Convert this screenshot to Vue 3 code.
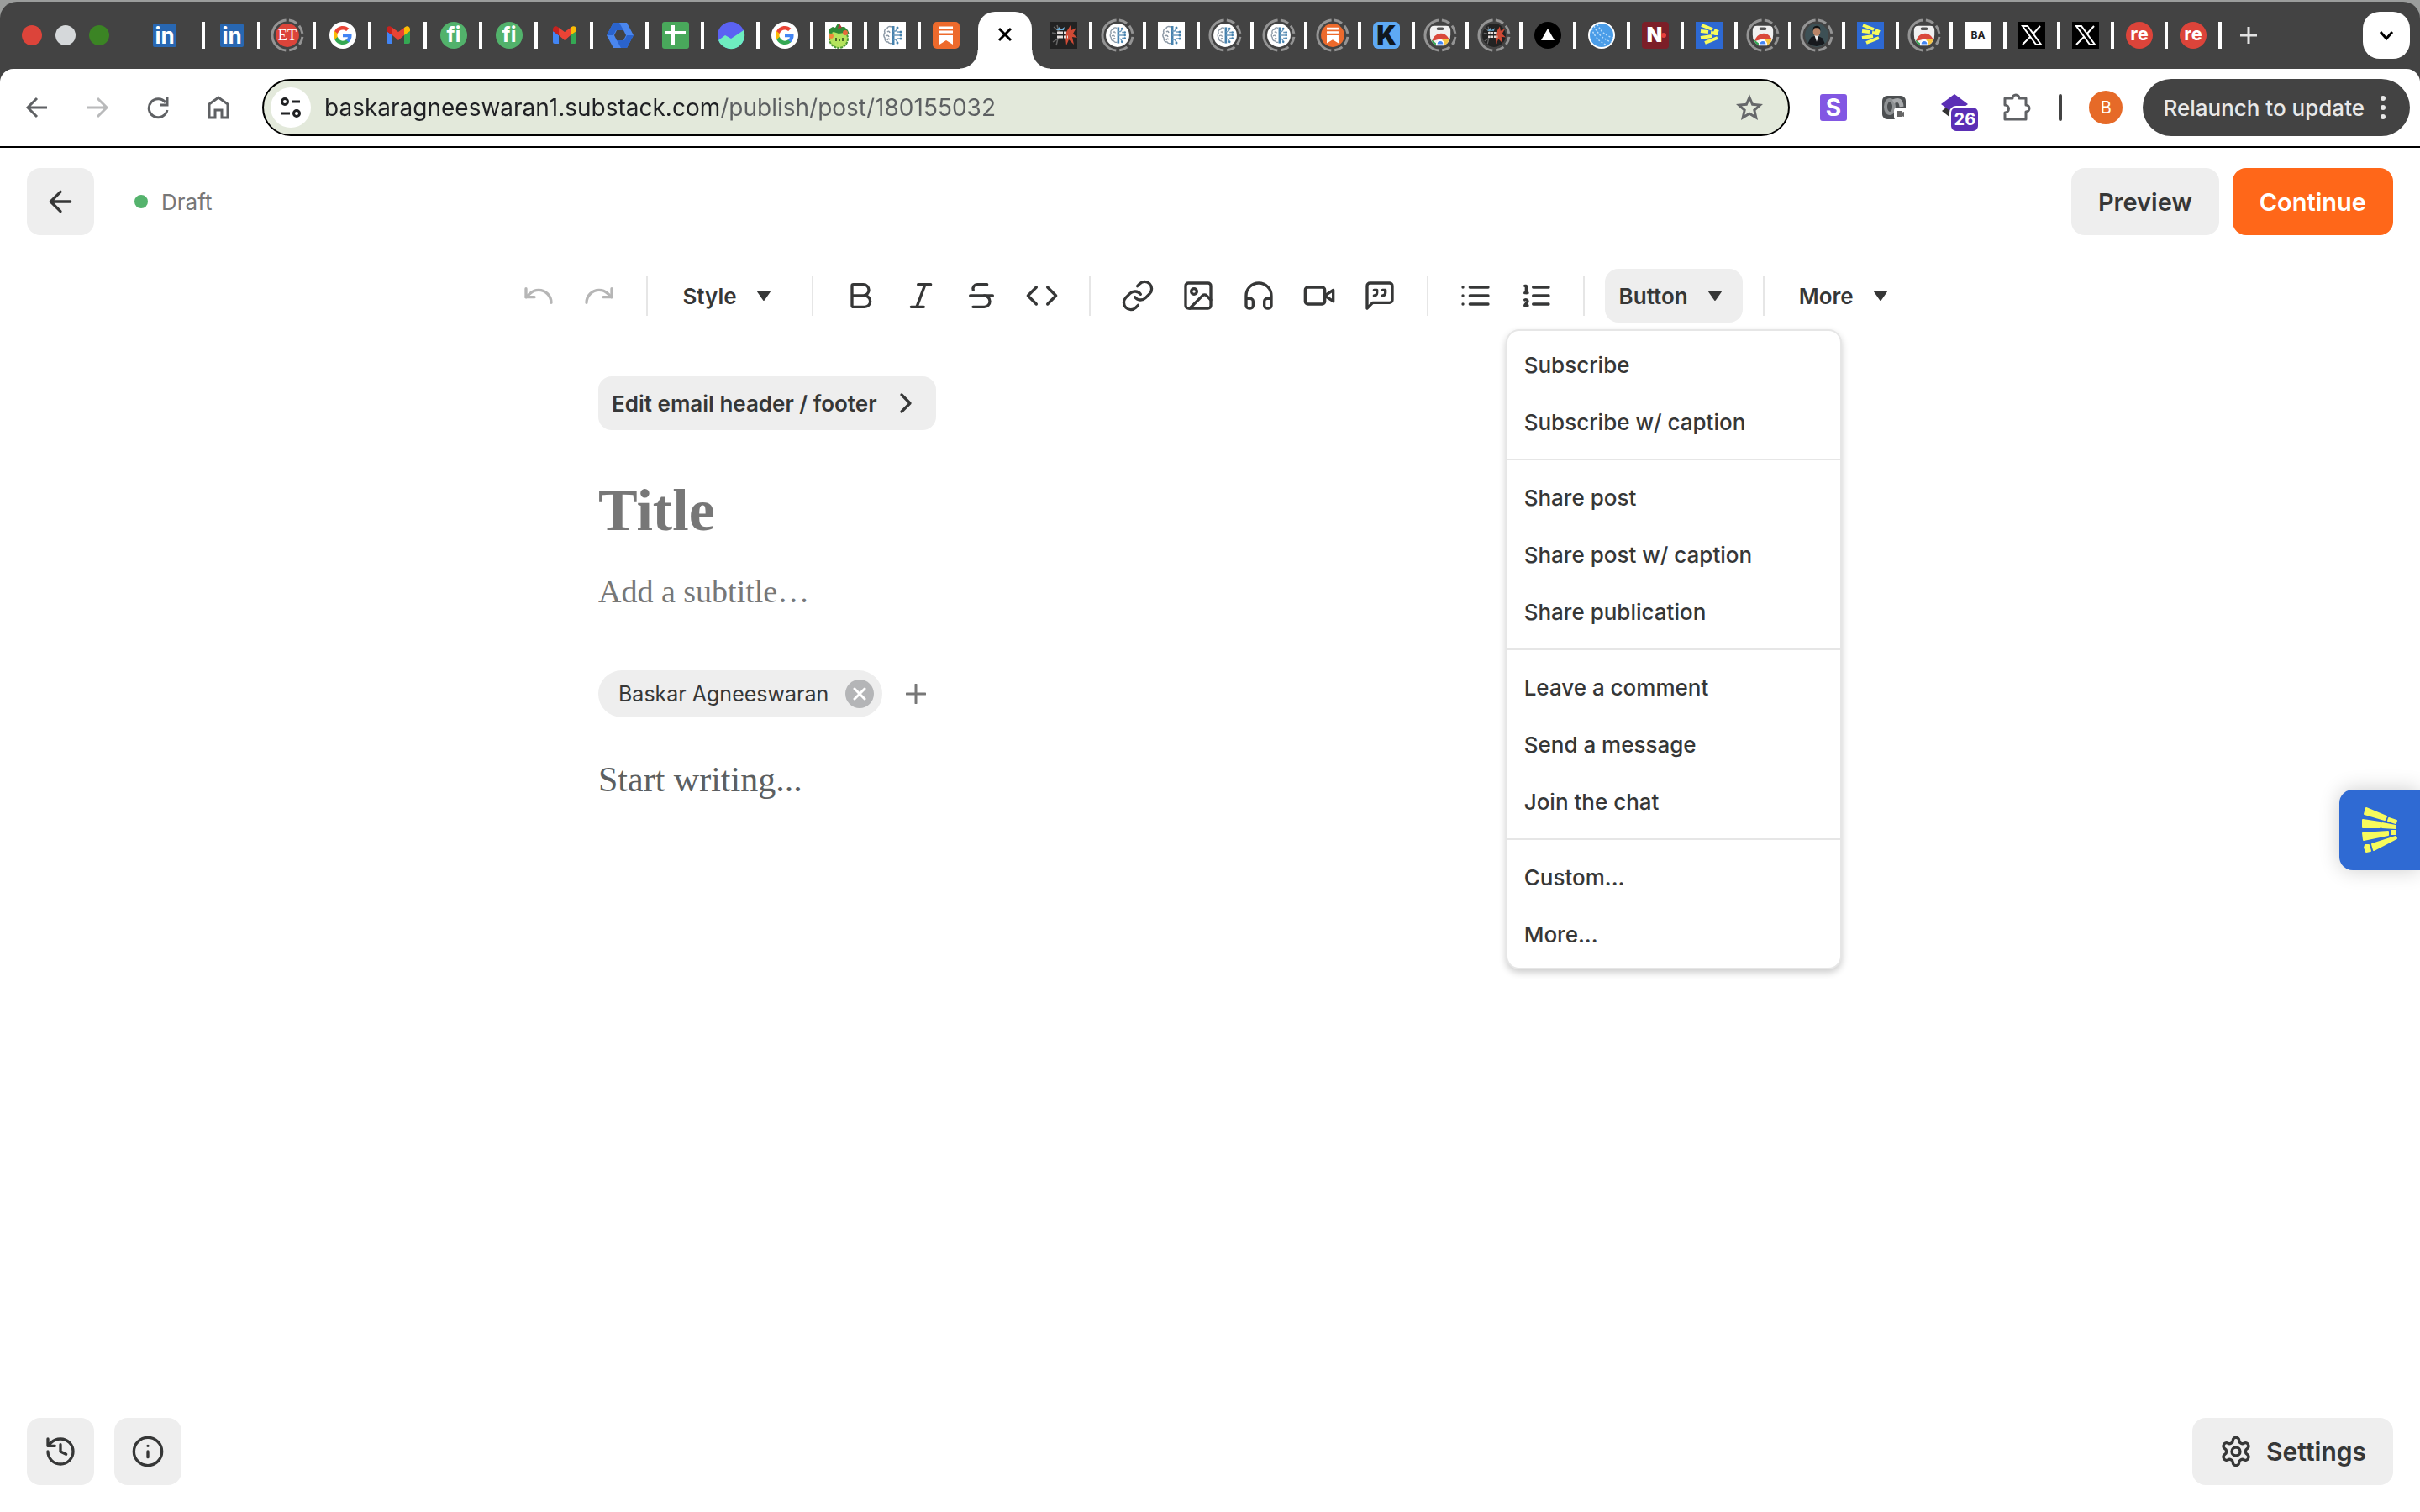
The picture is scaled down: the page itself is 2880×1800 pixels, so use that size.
<script setup>
import { ref } from 'vue';

const tabs = ref([
    { icon: 'linkedin', size: 'first' },
    { icon: 'linkedin', size: 'wide' },
    { icon: 'et', size: 'wide', ring: true },
    { icon: 'google', size: 'wide' },
    { icon: 'gmail', size: 'wide' },
    { icon: 'fi', size: 'wide' },
    { icon: 'fi', size: 'wide' },
    { icon: 'gmail', size: 'wide' },
    { icon: 'hexagon', size: 'wide' },
    { icon: 'sheets', size: 'wide' },
    { icon: 'wave', size: 'wide' },
    { icon: 'google' },
    { icon: 'monster' },
    { icon: 'brain' },
    { icon: 'substack', size: 'last' },
    { active: true },
    { icon: 'game' },
    { icon: 'brain', ring: true },
    { icon: 'brain' },
    { icon: 'brain', ring: true },
    { icon: 'brain', ring: true },
    { icon: 'substack', ring: true },
    { icon: 'k' },
    { icon: 'store', ring: true },
    { icon: 'game', ring: true },
    { icon: 'triangle' },
    { icon: 'ball' },
    { icon: 'n' },
    { icon: 'hand' },
    { icon: 'store', ring: true },
    { icon: 'person', ring: true },
    { icon: 'hand' },
    { icon: 'store', ring: true },
    { icon: 'ba' },
    { icon: 'x' },
    { icon: 'x' },
    { icon: 're' },
    { icon: 're' },
]);

// stroke icons, 24x24
const icons = {
    undo: ['M3 7v6h6', 'M21 17a9 9 0 0 0-9-9 9 9 0 0 0-6 2.3L3 13'],
    redo: ['M21 7v6h-6', 'M3 17a9 9 0 0 1 9-9 9 9 0 0 1 6 2.3l3 2.7'],
    bold: ['M6 12h9a4 4 0 0 1 0 8H7a1 1 0 0 1-1-1V5a1 1 0 0 1 1-1h7a4 4 0 0 1 0 8'],
    italic: ['M19 4h-9', 'M14 20H5', 'M15 4 9 20'],
    strike: ['M16 4H9a3 3 0 0 0-2.83 4', 'M14 12a4 4 0 0 1 0 8H6', 'M4 12h16'],
    code: ['m16 18 6-6-6-6', 'm8 6-6 6 6 6'],
    link: [
        'M10 13a5 5 0 0 0 7.54.54l3-3a5 5 0 0 0-7.07-7.07l-1.72 1.71',
        'M14 11a5 5 0 0 0-7.54-.54l-3 3a5 5 0 0 0 7.07 7.07l1.71-1.71',
    ],
    image: [
        'M5 3h14a2 2 0 0 1 2 2v14a2 2 0 0 1-2 2H5a2 2 0 0 1-2-2V5a2 2 0 0 1 2-2z',
        'M11 9a2 2 0 1 1-4 0 2 2 0 0 1 4 0z',
        'm21 15-3.086-3.086a2 2 0 0 0-2.828 0L6 21',
    ],
    audio: ['M3 14h3a2 2 0 0 1 2 2v3a2 2 0 0 1-2 2H5a2 2 0 0 1-2-2v-7a9 9 0 0 1 18 0v7a2 2 0 0 1-2 2h-1a2 2 0 0 1-2-2v-3a2 2 0 0 1 2-2h3'],
    video: ['m22 8-6 4 6 4V8Z', 'M4 6h10a2 2 0 0 1 2 2v8a2 2 0 0 1-2 2H4a2 2 0 0 1-2-2V8a2 2 0 0 1 2-2z'],
    quote: [
        'M21 15a2 2 0 0 1-2 2H7l-4 4V5a2 2 0 0 1 2-2h14a2 2 0 0 1 2 2z',
        'M8 12a2 2 0 0 0 2-2V8H8',
        'M14 12a2 2 0 0 0 2-2V8h-2',
    ],
    list: ['M8 6h13', 'M8 12h13', 'M8 18h13', 'M3 6h.01', 'M3 12h.01', 'M3 18h.01'],
    ordered: ['M10 6h11', 'M10 12h11', 'M10 18h11', 'M4 5h1v5', 'M4 10h2', 'M6 19H4c0-1 2-2 2-3s-1-1.5-2-1'],
};

const groups = [
    [{ icon: 'undo', label: 'Undo', disabled: true }, { icon: 'redo', label: 'Redo', disabled: true }],
    [{ text: 'Style' }],
    [
        { icon: 'bold', label: 'Bold' },
        { icon: 'italic', label: 'Italic' },
        { icon: 'strike', label: 'Strikethrough' },
        { icon: 'code', label: 'Code' },
    ],
    [
        { icon: 'link', label: 'Link' },
        { icon: 'image', label: 'Image' },
        { icon: 'audio', label: 'Audio' },
        { icon: 'video', label: 'Video' },
        { icon: 'quote', label: 'Quote' },
    ],
    [{ icon: 'list', label: 'Bullet list' }, { icon: 'ordered', label: 'Numbered list' }],
    [{ text: 'Button', menu: true }],
    [{ text: 'More' }],
];

const menu = [
    ['Subscribe', 'Subscribe w/ caption'],
    ['Share post', 'Share post w/ caption', 'Share publication'],
    ['Leave a comment', 'Send a message', 'Join the chat'],
    ['Custom...', 'More...'],
];

const url = ref('baskaragneeswaran1.substack.com/publish/post/180155032');
const title = ref('');
const subtitle = ref('');
const body = ref('');
const menuOpen = ref(true);
</script>

<template>
    <div class="window">
        <div class="tab-strip">
            <div class="lights">
                <span class="light red"></span>
                <span class="light grey"></span>
                <span class="light green"></span>
            </div>
            <template v-for="(tab, i) in tabs" :key="i">
                <button v-if="tab.active" class="tab-active" aria-label="Close tab">
                    <svg width="20" height="20" viewBox="0 0 20 20"><path d="M3 3l14 14M17 3L3 17" stroke="#000" stroke-width="3" /></svg>
                </button>
                <button v-else class="tab" :class="tab.size" :aria-label="tab.icon">
                    <svg width="40" height="40" viewBox="-20 -20 40 40">
                        <circle v-if="tab.ring" r="18" fill="none" stroke="#949494" stroke-width="3" stroke-dasharray="10 4 10 4 10 4 10 4 53 4" transform="rotate(-84)" />
                        <g :class="{ ringed: tab.ring }">
                            <g v-if="tab.icon === 'linkedin'">
                                <rect x="-14" y="-14" width="28" height="28" rx="2" fill="#2867b2" />
                                <text class="logo" x="0" y="10" font-size="26" fill="#fff">in</text>
                            </g>
                            <g v-else-if="tab.icon === 'et'">
                                <circle r="16" fill="#dc443a" />
                                <text class="logo serif" x="0" y="7" font-size="21" fill="#fff">ET</text>
                            </g>
                            <g v-else-if="tab.icon === 'google'">
                                <circle r="16" fill="#fff" />
                                <g transform="translate(-12 -12)">
                                    <path fill="#4285f4" d="M22.56 12.25c0-.78-.07-1.53-.2-2.25H12v4.26h5.92c-.26 1.37-1.04 2.53-2.21 3.31v2.77h3.57c2.08-1.92 3.28-4.74 3.28-8.09z" />
                                    <path fill="#34a853" d="M12 23c2.97 0 5.46-.98 7.28-2.66l-3.57-2.77c-.98.66-2.23 1.06-3.71 1.06-2.86 0-5.29-1.93-6.16-4.53H2.18v2.84C3.99 20.53 7.7 23 12 23z" />
                                    <path fill="#fbbc05" d="M5.84 14.09c-.22-.66-.35-1.36-.35-2.09s.13-1.43.35-2.09V7.07H2.18C1.43 8.55 1 10.22 1 12s.43 3.45 1.18 4.93l3.66-2.84z" />
                                    <path fill="#ea4335" d="M12 5.38c1.62 0 3.06.56 4.21 1.64l3.15-3.15C17.45 2.09 14.97 1 12 1 7.7 1 3.99 3.47 2.18 7.07l3.66 2.84c.87-2.6 3.3-4.53 6.16-4.53z" />
                                </g>
                            </g>
                            <g v-else-if="tab.icon === 'gmail'">
                                <path d="M-14-5v13a2 2 0 0 0 2 2h5V0z" fill="#4285f4" />
                                <path d="M14-5v13a2 2 0 0 1-2 2H7V0z" fill="#34a853" />
                                <path d="M-7 0v-9L0-4l7-5v9L0 6z" fill="#ea4335" />
                                <path d="M-14-5v-2c0-4 4-5 7-2v9z" fill="#c5221f" />
                                <path d="M14-5v-2c0-4-4-5-7-2v9z" fill="#fbbc04" />
                            </g>
                            <g v-else-if="tab.icon === 'fi'">
                                <circle r="16" fill="#52b26b" />
                                <text class="logo" x="0" y="8" font-size="25" fill="#fff">fi</text>
                            </g>
                            <g v-else-if="tab.icon === 'hexagon'">
                                <path d="M-8-15H8L16 0 8 15H-8L-16 0z" fill="#4a86ee" />
                                <path d="M-8-15h7L4-6h-9l-3 6h-8zM8 15H1l-5-9h9l3-6h8z" fill="#2a63cc" />
                                <path d="M-4-6h8l3 6-3 6h-8l-3-6z" fill="#424242" />
                            </g>
                            <g v-else-if="tab.icon === 'sheets'">
                                <rect x="-16" y="-16" width="32" height="32" rx="3" fill="#49a85b" />
                                <path d="M-12-3h24M-3-12v24" stroke="#fff" stroke-width="4" />
                            </g>
                            <g v-else-if="tab.icon === 'wave'">
                                <circle r="16" fill="#5b62f3" />
                                <path d="M-15 6l8-6 7 4L15-6A16 16 0 0 1-15 6z" fill="#6eedc0" />
                            </g>
                            <g v-else-if="tab.icon === 'monster'">
                                <rect x="-16" y="-16" width="32" height="32" fill="#fff" />
                                <ellipse cx="0" cy="4" rx="11" ry="11" fill="#b5e45d" stroke="#4c9a36" stroke-width="2" stroke-dasharray="3 1" />
                                <path d="M-11-2l-1-5 5-3 3 1 3-5 4 4 4 0 4 4 2 5-6-2-7 1-6-2z" fill="#2f8b37" />
                                <path d="M-1-8l2-6 3 5z" fill="#b13b38" />
                                <circle cx="-9" cy="1" r="3" fill="#ef8a3c" />
                                <circle cx="8" cy="-3" r="3" fill="#e66a3d" />
                                <path d="M-3 3v4M1 4v3M5 3v4" stroke="#4c6b2a" stroke-width="2" />
                            </g>
                            <g v-else-if="tab.icon === 'brain'">
                                <circle v-if="tab.ring" r="16" fill="#fff" />
                                <rect v-else x="-16" y="-16" width="32" height="32" fill="#fff" />
                                <path d="M-1-10c-3-1-5 0-5 2-3 0-4 3-3 5-2 2-1 5 0 6 0 4 2 5 4 5 1 2 4 2 4 1M-6-4q2-2 3 1M-8 1q3-2 4 1M-6 6q1-3 3-1" fill="none" stroke="#8b98a5" stroke-width="1.5" />
                                <path d="M1-11V11" stroke="#4682ae" stroke-width="3" />
                                <path d="M1-5h3l2-3M1 0h8M1 5h3l2 3M6-4h3M6 4h3" fill="none" stroke="#6d9bbd" stroke-width="1.5" />
                                <circle cx="6" cy="-9" r="1.5" fill="#4682ae" />
                                <circle cx="10" cy="-4" r="1.5" fill="#4682ae" />
                                <circle cx="10" cy="0" r="1.5" fill="#4682ae" />
                                <circle cx="10" cy="4" r="1.5" fill="#4682ae" />
                                <circle cx="6" cy="9" r="1.5" fill="#4682ae" />
                            </g>
                            <g v-else-if="tab.icon === 'substack'">
                                <circle v-if="tab.ring" r="16" fill="#ed6a2c" />
                                <rect v-else x="-16" y="-16" width="32" height="32" rx="5" fill="#ed6a2c" />
                                <path d="M-8-9H8M-8-4H8" stroke="#fff" stroke-width="3" />
                                <path d="M-8 0H8v11l-8-5-8 5z" fill="#fff" />
                            </g>
                            <g v-else-if="tab.icon === 'game'">
                                <circle v-if="tab.ring" r="16" fill="#222" />
                                <rect v-else x="-16" y="-16" width="32" height="32" fill="#222" />
                                <path d="M-12-10l6 5-2-7M-13 8l6-4-2 8M-14-3l5 1" stroke="#666" stroke-width="1.5" fill="none" />
                                <path d="M3-4l5-8 1 6 6-3-4 7 5 5-6-1 2 9-6-6-3 7-1-9z" fill="#cf4a35" />
                                <path d="M-9-6l4-4 2 3 4-3-1 4z" fill="#6faed6" />
                                <path d="M-8-3H4M-8 2H5" stroke="#e6dedb" stroke-width="3" stroke-dasharray="3 1" />
                            </g>
                            <g v-else-if="tab.icon === 'k'">
                                <rect x="-16" y="-16" width="32" height="32" rx="6" fill="#5ea9f4" />
                                <text class="logo black" x="0" y="11" font-size="31" fill="#101820">K</text>
                            </g>
                            <g v-else-if="tab.icon === 'store'">
                                <path d="M-14-7q0-6 6-6H8q6 0 6 6v6q0 11-8 14H-6q-8-3-8-14z" fill="#f1f1f1" />
                                <rect x="-5" y="-11" width="10" height="4" rx="2" fill="#555" />
                                <path d="M-11 8A12 12 0 0 1 12 5H0z" fill="#d9483b" />
                                <path d="M-12 6q1 5 5 7h4z" fill="#34a853" />
                                <path d="M3 5h9q0 5-5 8H2z" fill="#f6c544" />
                                <path d="M-5 13a5 6 0 0 1 10 0z" fill="#4285f4" stroke="#fff" stroke-width="2" />
                            </g>
                            <g v-else-if="tab.icon === 'triangle'">
                                <circle r="16" fill="#000" />
                                <path d="M0-8L8 6H-8z" fill="#fff" />
                            </g>
                            <g v-else-if="tab.icon === 'ball'">
                                <circle r="15" fill="#4b9de8" stroke="#fff" stroke-width="2" />
                                <path d="M-9-11Q-2 4 12 8M-5-13Q1 0 14 3M-12-8Q-6 8 8 12" fill="none" stroke="#b9dcfa" stroke-width="1.5" stroke-dasharray="2 2" />
                            </g>
                            <g v-else-if="tab.icon === 'n'">
                                <rect x="-16" y="-16" width="32" height="32" rx="4" fill="#7c1f28" />
                                <text class="logo black" x="-1" y="8" font-size="24" fill="#fff">N</text>
                                <circle cx="10" cy="0" r="3" fill="#e8413b" />
                            </g>
                            <g v-else-if="tab.icon === 'hand'">
                                <rect x="-16" y="-16" width="32" height="32" fill="#2d69d3" />
                                <path d="M-9-12L4-7M6-6l5 2M-10-5l9 1M2-3l8 1M-10 3l13-2M6-2h4M-9 11v1M-5 9L10 3" stroke="#f7fb5c" stroke-width="4" />
                            </g>
                            <g v-else-if="tab.icon === 'person'">
                                <circle r="16" fill="#3d5055" />
                                <path d="M-12 11l4-8 8-3 8 4 3 7Q0 19-12 11z" fill="#17191d" />
                                <path d="M-3 0l3 9 3-9z" fill="#eee" />
                                <ellipse cx="0" cy="-5" rx="5" ry="6" fill="#b98568" />
                                <path d="M-5-6q-1-7 5-7t5 7l-2-4h-6z" fill="#111" />
                            </g>
                            <g v-else-if="tab.icon === 'ba'">
                                <rect x="-16" y="-16" width="32" height="32" fill="#fff" />
                                <text class="logo" x="0" y="4" font-size="12" fill="#222">BA</text>
                            </g>
                            <g v-else-if="tab.icon === 'x'">
                                <rect x="-16" y="-16" width="32" height="32" fill="#000" />
                                <path d="M-11-11h6L11 11H5zM10-11L1-1M-2 2l-9 9" fill="none" stroke="#fff" stroke-width="2" />
                            </g>
                            <g v-else>
                                <circle r="16" fill="#dc443a" />
                                <text class="logo" x="0" y="6" font-size="22" fill="#fff">re</text>
                            </g>
                        </g>
                    </svg>
                </button>
            </template>
            <button class="new-tab" aria-label="New tab">
                <svg width="20" height="20" viewBox="0 0 20 20"><path d="M10 0v20M0 10h20" stroke="#e3e3e3" stroke-width="3" /></svg>
            </button>
            <button class="tab-search" aria-label="Search tabs">
                <svg width="20" height="20" viewBox="0 0 20 20"><path d="M3 6l7 8 7-8" fill="none" stroke="#000" stroke-width="3" /></svg>
            </button>
        </div>

        <div class="nav-back">
            <div class="nav-bar">
                <div class="nav-buttons">
                    <button aria-label="Back">
                        <svg width="28" height="28" viewBox="0 0 28 28"><path d="M26 14H4M14 3L3 14l11 11" fill="none" stroke="#5f6164" stroke-width="3" /></svg>
                    </button>
                    <button aria-label="Forward">
                        <svg width="28" height="28" viewBox="0 0 28 28"><path d="M2 14h22M14 3l11 11-11 11" fill="none" stroke="#b9babb" stroke-width="3" /></svg>
                    </button>
                    <button aria-label="Reload">
                        <svg width="28" height="28" viewBox="0 0 28 28"><path d="M23 8a11 11 0 1 0 2 9M25 2v9h-9" fill="none" stroke="#5f6164" stroke-width="3" /></svg>
                    </button>
                    <button aria-label="Home">
                        <svg width="28" height="30" viewBox="0 0 28 30"><path d="M3 11L14 3l11 8v16h-7v-9h-8v9H3z" fill="none" stroke="#5f6164" stroke-width="3" /></svg>
                    </button>
                </div>
                <div class="omnibox">
                    <button class="site-info" aria-label="Site information">
                        <svg width="28" height="28" viewBox="0 0 28 28" fill="none" stroke="#1f2023" stroke-width="3">
                            <circle cx="7" cy="7" r="3.5" />
                            <circle cx="21" cy="21" r="3.5" />
                            <path d="M15 7h10M3 21h10" />
                        </svg>
                    </button>
                    <input class="url" type="text" v-model="url" aria-label="Address" />
                    <button aria-label="Bookmark">
                        <svg width="32" height="32" viewBox="0 0 32 32"><path d="M16 4l3.600 8.300 9 .8-6.800 6 2 8.800L16 23.200 8.200 27.900l2-8.800-6.800-6 9-.8z" fill="none" stroke="#66686a" stroke-width="3" /></svg>
                    </button>
                </div>
                <div class="extensions">
                    <button aria-label="Scribe">
                        <svg width="32" height="32" viewBox="0 0 32 32">
                            <rect width="32" height="32" rx="3" fill="#8257e3" />
                            <text class="logo" x="16" y="26" font-size="28" fill="#fff">S</text>
                        </svg>
                    </button>
                    <button aria-label="Recorder">
                        <svg width="32" height="32" viewBox="0 0 32 32">
                            <rect x="2" y="2" width="28" height="28" rx="6" fill="#4d5052" />
                            <ellipse cx="11" cy="15" rx="5" ry="8" fill="none" stroke="#8f9294" stroke-width="4" />
                            <path d="M15 9q9-5 10 6" fill="none" stroke="#a9abad" stroke-width="5" />
                            <rect x="16" y="16" width="15" height="15" rx="4" fill="#fff" />
                            <path d="M19 20h6v2l3-1v6l-3-1v1h-6z" fill="#666" />
                        </svg>
                    </button>
                    <button class="badged" aria-label="Extension with 26 items">
                        <svg width="32" height="32" viewBox="0 0 32 32">
                            <path d="M16 8l15 12-15 12L1 20z" fill="#343434" />
                            <path d="M16 0l16 12-16 12L0 12z" fill="#5b2fb5" />
                        </svg>
                        <span class="badge">26</span>
                    </button>
                    <button aria-label="Extensions">
                        <svg width="36" height="36" viewBox="0 0 36 36"><path d="M4 7h9a4 4 0 0 1 8 0h8v8a4 4 0 0 1 0 8v9H4v-8a4 4 0 0 0 0-9z" fill="none" stroke="#5f6164" stroke-width="3" stroke-linejoin="round" /></svg>
                    </button>
                </div>
                <span class="nav-divider"></span>
                <button class="avatar">B</button>
                <button class="relaunch">
                    Relaunch to update
                    <svg width="8" height="28" viewBox="0 0 8 28" fill="#e8e8e8"><circle cx="4" cy="3" r="3" /><circle cx="4" cy="14" r="3" /><circle cx="4" cy="25" r="3" /></svg>
                </button>
            </div>
        </div>

        <main class="page">
            <header class="post-header">
                <button class="square" aria-label="Back to posts">
                    <svg class="icon" viewBox="0 0 24 24"><path d="m12 19-7-7 7-7M19 12H5" /></svg>
                </button>
                <span class="status"><span class="dot"></span>Draft</span>
                <button class="action">Preview</button>
                <button class="action primary">Continue</button>
            </header>

            <div class="toolbar">
                <div v-for="(group, g) in groups" :key="g" class="group">
                    <template v-for="item in group" :key="item.icon || item.text">
                        <button v-if="item.icon" class="tool" :disabled="item.disabled" :aria-label="item.label">
                            <svg class="icon" viewBox="0 0 24 24"><path v-for="d in icons[item.icon]" :key="d" :d="d" /></svg>
                        </button>
                        <div v-else class="dropdown">
                            <button class="pill" :class="{ open: item.menu && menuOpen }" @click="item.menu && (menuOpen = !menuOpen)">
                                {{ item.text }}
                                <svg width="32" height="32" viewBox="0 0 32 32"><path d="M9 11h14l-7 10z" fill="#363737" stroke="#363737" stroke-width="2" stroke-linejoin="round" /></svg>
                            </button>
                            <div v-if="item.menu && menuOpen" class="menu">
                                <div v-for="(section, s) in menu" :key="s" class="menu-section">
                                    <button v-for="entry in section" :key="entry" class="menu-item">{{ entry }}</button>
                                </div>
                            </div>
                        </div>
                    </template>
                </div>
            </div>

            <div class="editor">
                <button class="edit-header">
                    Edit email header / footer
                    <svg class="icon" viewBox="0 0 24 24"><path d="m9 18 6-6-6-6" /></svg>
                </button>
                <input class="title" type="text" v-model="title" placeholder="Title" aria-label="Title" />
                <input class="subtitle" type="text" v-model="subtitle" placeholder="Add a subtitle…" aria-label="Subtitle" />
                <div class="authors">
                    <span class="author">
                        Baskar Agneeswaran
                        <button class="remove" aria-label="Remove author">
                            <svg width="34" height="34" viewBox="0 0 34 34"><circle cx="17" cy="17" r="17" fill="#b4b5b7" /><path d="M11 11l12 12M23 11L11 23" stroke="#fff" stroke-width="3" stroke-linecap="round" /></svg>
                        </button>
                    </span>
                    <button class="add" aria-label="Add author">
                        <svg width="24" height="24" viewBox="0 0 24 24"><path d="M12 1v22M1 12h22" stroke="#777" stroke-width="3" stroke-linecap="round" /></svg>
                    </button>
                </div>
                <textarea class="body" v-model="body" placeholder="Start writing..." aria-label="Post body"></textarea>
            </div>

            <footer class="footer">
                <button class="square" aria-label="Version history">
                    <svg class="icon" viewBox="0 0 24 24"><path d="M3 12a9 9 0 1 0 9-9 9.750 9.750 0 0 0-6.740 2.740L3 8M3 3v5h5M12 7v5l4 2" /></svg>
                </button>
                <button class="square" aria-label="Post info">
                    <svg class="icon" viewBox="0 0 24 24"><circle cx="12" cy="12" r="10" /><path d="M12 16v-4M12 8h.01" /></svg>
                </button>
                <button class="action settings">
                    <svg class="icon" viewBox="0 0 24 24">
                        <path d="M12.220 2h-.44a2 2 0 0 0-2 2v.18a2 2 0 0 1-1 1.730l-.43.25a2 2 0 0 1-2 0l-.15-.08a2 2 0 0 0-2.730.73l-.22.38a2 2 0 0 0 .73 2.730l.15.1a2 2 0 0 1 1 1.720v.51a2 2 0 0 1-1 1.740l-.15.09a2 2 0 0 0-.73 2.730l.22.38a2 2 0 0 0 2.730.73l.15-.08a2 2 0 0 1 2 0l.43.25a2 2 0 0 1 1 1.730V20a2 2 0 0 0 2 2h.44a2 2 0 0 0 2-2v-.18a2 2 0 0 1 1-1.730l.43-.25a2 2 0 0 1 2 0l.15.08a2 2 0 0 0 2.730-.73l.22-.39a2 2 0 0 0-.73-2.730l-.15-.08a2 2 0 0 1-1-1.740v-.5a2 2 0 0 1 1-1.740l.15-.09a2 2 0 0 0 .73-2.730l-.22-.38a2 2 0 0 0-2.730-.73l-.15.08a2 2 0 0 1-2 0l-.43-.25a2 2 0 0 1-1-1.730V4a2 2 0 0 0-2-2z" />
                        <circle cx="12" cy="12" r="3" />
                    </svg>
                    Settings
                </button>
            </footer>
        </main>

        <button class="side-widget" aria-label="Open side widget">
            <svg width="44" height="56" viewBox="0 0 44 56" fill="#f7fb5c" stroke="#f7fb5c" stroke-width="2" stroke-linejoin="round">
                <path d="M6 2l24 10-2 4L4 9z" />
                <path d="M33 14l9 3-1 3-9-3z" />
                <path d="M2 16l20 3v6L2 25z" />
                <path d="M25 20l16 3v3l-16-1z" />
                <path d="M2 32l30-2v4L3 40z" />
                <path d="M36 29h5v4h-5z" />
                <path d="M13 45l28-9 1 2-27 14z" />
                <path d="M5 46h4l2 7-5 1-2-5z" />
            </svg>
        </button>
    </div>
</template>

<style>
body {
    background: #9b9d9c;
}
</style>

<style scoped>
.window {
    position: relative;
    display: flex;
    flex-direction: column;
    box-sizing: border-box;
    min-height: 100vh;
    padding-top: 2px;
    font-family: Inter, 'Liberation Sans', sans-serif;
    color: #363737;
}

button {
    display: flex;
    align-items: center;
    justify-content: center;
    flex-shrink: 0;
    margin: 0;
    padding: 0;
    border: 0;
    background: none;
    font-family: inherit;
    color: inherit;
    white-space: nowrap;
}

input,
textarea {
    box-sizing: border-box;
    padding: 0;
    border: 0;
    outline: 0;
    background: none;
}

.tab-strip {
    display: flex;
    align-items: center;
    height: 80px;
    padding: 0 12px 0 26px;
    background: #434343;
    border-radius: 20px 20px 0 0;
}

.lights {
    display: flex;
    gap: 16px;
    margin-right: 18px;
}

.light {
    width: 24px;
    height: 24px;
    border-radius: 50%;
}

.red {
    background: #dc443a;
}

.grey {
    background: #d5d8da;
}

.green {
    background: #3b8424;
}

.tab {
    box-sizing: border-box;
    width: 64px;
    height: 32px;
    border-right: 4px solid #fff;
}

.tab.wide {
    width: 66px;
    padding-left: 2px;
}

.tab.first {
    width: 96px;
    padding-left: 4px;
}

.tab.last {
    border-color: transparent;
}

.ringed {
    transform: scale(0.87);
}

.logo {
    font-family: Inter, sans-serif;
    font-weight: 700;
    text-anchor: middle;
}

.logo.serif {
    font-family: 'Liberation Serif', serif;
    font-weight: 400;
}

.logo.black {
    font-weight: 900;
}

.tab-active {
    position: relative;
    align-self: flex-end;
    box-sizing: border-box;
    width: 64px;
    height: 68px;
    margin: 0 8px 0 4px;
    padding-bottom: 14px;
    border-radius: 20px 20px 0 0;
    background: #fff;
}

.tab-active::before,
.tab-active::after {
    content: '';
    position: absolute;
    bottom: 0;
    width: 22px;
    height: 22px;
}

.tab-active::before {
    right: 100%;
    background: radial-gradient(circle at 0 0, transparent 21px, #fff 22px);
}

.tab-active::after {
    left: 100%;
    background: radial-gradient(circle at 100% 0, transparent 21px, #fff 22px);
}

.new-tab {
    margin-left: 22px;
}

.tab-search {
    width: 56px;
    height: 56px;
    margin-left: auto;
    border-radius: 20px;
    background: #fff;
}

.nav-back {
    background: #434343;
}

.nav-bar {
    display: flex;
    align-items: center;
    height: 92px;
    padding: 0 12px 0 30px;
    border-bottom: 2px solid #000;
    border-radius: 16px 16px 0 0;
    background: #fff;
}

.nav-buttons {
    display: flex;
    gap: 44px;
    margin-right: 38px;
}

.omnibox {
    display: flex;
    flex: 1;
    align-items: center;
    box-sizing: border-box;
    height: 68px;
    padding: 0 30px 0 8px;
    border: 2px solid #000;
    border-radius: 34px;
    background: #e3e9db;
}

.site-info {
    width: 48px;
    height: 48px;
    border-radius: 50%;
    background: #fff;
}

/* host in dark, path in grey */
.url {
    flex: 1;
    height: 48px;
    margin-left: 16px;
    background: linear-gradient(to right, #202124 470px, #5c5f61 470px);
    background-clip: text;
    -webkit-background-clip: text;
    color: transparent;
    font-family: Inter, sans-serif;
    font-size: 28px;
}

.extensions {
    display: flex;
    align-items: center;
    gap: 40px;
    margin-left: 36px;
}

.badged {
    position: relative;
}

.badge {
    position: absolute;
    top: 14px;
    left: 10px;
    width: 32px;
    height: 28px;
    border: 2px solid #fff;
    border-radius: 8px;
    background: #5b2fb5;
    color: #fff;
    font-size: 20px;
    font-weight: 700;
    line-height: 28px;
}

.nav-divider {
    width: 4px;
    height: 32px;
    margin: 0 32px;
    border-radius: 2px;
    background: #434343;
}

.avatar {
    width: 40px;
    height: 40px;
    margin-right: 24px;
    border-radius: 50%;
    background: #e66a28;
    color: #fff;
    font-size: 20px;
}

.relaunch {
    gap: 18px;
    height: 68px;
    padding: 0 28px 0 24px;
    border-radius: 34px;
    background: #434343;
    color: #e8e8e8;
    font-size: 26px;
    font-weight: 500;
}

.page {
    display: flex;
    flex: 1;
    flex-direction: column;
    background: #fff;
}

.icon {
    width: 40px;
    height: 40px;
    fill: none;
    stroke: currentColor;
    stroke-width: 2;
    stroke-linecap: round;
    stroke-linejoin: round;
}

.post-header {
    display: flex;
    align-items: center;
    gap: 16px;
    padding: 24px 32px 40px;
}

.square {
    width: 80px;
    height: 80px;
    border-radius: 16px;
    background: #eee;
}

.status {
    display: flex;
    align-items: center;
    gap: 16px;
    margin: 0 auto 0 32px;
    color: #777;
    font-size: 26px;
}

.dot {
    width: 16px;
    height: 16px;
    border-radius: 50%;
    background: #55b36d;
}

.action {
    height: 80px;
    padding: 0 32px;
    border-radius: 16px;
    background: #eee;
    font-size: 29px;
    font-weight: 600;
}

.action.primary {
    background: #ff6719;
    color: #fff;
}

.toolbar {
    display: flex;
    justify-content: center;
}

.group {
    display: flex;
    align-items: center;
    gap: 8px;
}

.group + .group::before {
    content: '';
    width: 2px;
    height: 48px;
    margin: 0 16px 0 24px;
    background: #e6e6e6;
}

.tool {
    width: 64px;
    height: 64px;
}

.tool:disabled {
    color: #b6b6b6;
}

.dropdown {
    position: relative;
}

.pill {
    gap: 16px;
    height: 64px;
    padding: 0 17px;
    border-radius: 16px;
    font-size: 26px;
    font-weight: 600;
}

.pill.open {
    background: #eee;
}

.menu {
    position: absolute;
    top: 72px;
    right: -118px;
    z-index: 2;
    box-sizing: border-box;
    width: 400px;
    padding: 6px 0;
    border: 2px solid #e6e6e6;
    border-radius: 16px;
    background: #fff;
    box-shadow: 0 4px 8px rgba(0, 0, 0, 0.2);
}

.menu-section + .menu-section {
    margin-top: 10px;
    padding-top: 10px;
    border-top: 2px solid #e6e6e6;
}

.menu-item {
    justify-content: flex-start;
    width: 100%;
    height: 68px;
    padding: 0 20px;
    font-size: 26px;
    font-weight: 500;
}

.editor {
    display: flex;
    flex: 1;
    flex-direction: column;
    align-items: flex-start;
    width: 100%;
    max-width: 1456px;
    margin: 64px auto 0;
}

.edit-header {
    gap: 14px;
    height: 64px;
    padding: 0 16px;
    border-radius: 16px;
    background: #eee;
    font-size: 26px;
    font-weight: 600;
}

.title,
.subtitle,
.body {
    width: 100%;
    font-family: 'Liberation Serif', serif;
}

.title {
    height: 80px;
    margin-top: 56px;
    font-size: 70px;
    font-weight: 700;
}

.subtitle {
    height: 48px;
    margin-top: 32px;
    font-size: 38px;
}

.title::placeholder,
.subtitle::placeholder {
    color: #777;
    opacity: 1;
}

.authors {
    display: flex;
    align-items: center;
    gap: 28px;
    margin-top: 70px;
}

.author {
    display: flex;
    align-items: center;
    gap: 20px;
    height: 56px;
    padding: 0 10px 0 24px;
    border-radius: 28px;
    background: #eee;
    font-size: 25px;
}

.body {
    flex: 1;
    margin-top: 44px;
    font-size: 42px;
    line-height: 60px;
    resize: none;
}

.body::placeholder {
    color: #5c5f61;
    opacity: 1;
}

.footer {
    display: flex;
    gap: 24px;
    padding: 32px;
}

.settings {
    gap: 16px;
    margin-left: auto;
    font-size: 30px;
}

.side-widget {
    position: absolute;
    top: 940px;
    right: 0;
    width: 96px;
    height: 96px;
    border-radius: 16px 0 0 16px;
    background: #2f6ad3;
    box-shadow: 0 0 24px rgba(0, 0, 0, 0.2);
}
</style>
